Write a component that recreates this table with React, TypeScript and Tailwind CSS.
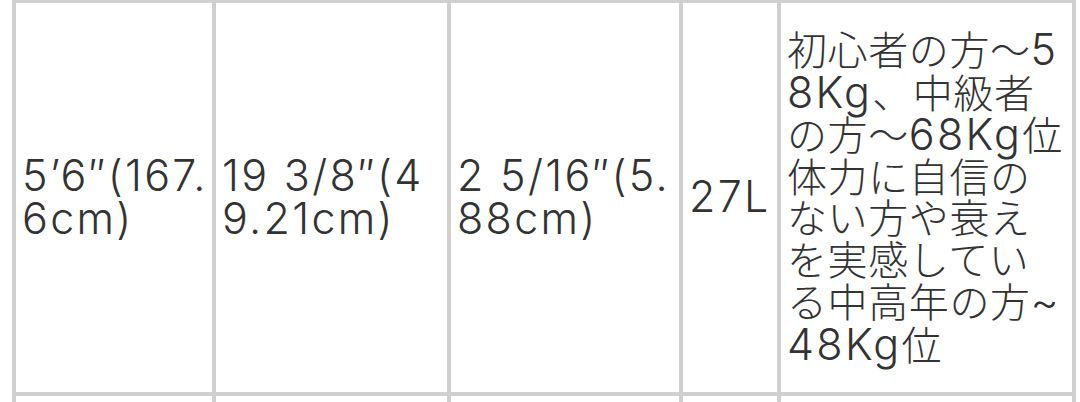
import React from "react";

const font = { fontFamily: 'Inter, "Noto Sans CJK JP", "Noto Sans", sans-serif' };

function Line({ text }: { text: string }) {
  const parts = text.split(/([\x00-\x7F’″~]+)/).filter((p) => p.length > 0);
  return (
    <div>
      {parts.map((p, i) =>
        /^[\x00-\x7F’″~]+$/.test(p) ? (
          <span key={i} className="text-[43px] tracking-[2.3px]">
            {p}
          </span>
        ) : (
          <span key={i} className="tracking-[0.6px]">
            {p}
          </span>
        )
      )}
    </div>
  );
}

function Cell({ lines }: { lines: string[] }) {
  return (
    <div className="bg-white flex items-center pl-[6px] pr-[0px]">
      <div className="text-[40px] leading-[41.5px] text-[#333333] whitespace-nowrap font-light">
        {lines.map((l, i) => (
          <Line key={i} text={l} />
        ))}
      </div>
    </div>
  );
}

export default function App() {
  return (
    <div className="w-[1080px] h-[402px] bg-white overflow-hidden" style={font}>
      <div className="ml-[12px] w-[1064px] bg-[#cfcfcf] pt-[3px] px-[4px] grid grid-cols-[196px_231px_228px_94px_291px] grid-rows-[389px_60px] gap-[4px]">
        <Cell lines={["5’6″(167.", "6cm)"]} />
        <Cell lines={["19 3/8″(4", "9.21cm)"]} />
        <Cell lines={["2 5/16″(5.", "88cm)"]} />
        <Cell lines={["27L"]} />
        <Cell
          lines={[
            "初心者の方～5",
            "8Kg、中級者",
            "の方～68Kg位",
            "体力に自信の",
            "ない方や衰え",
            "を実感してい",
            "る中高年の方~",
            "48Kg位",
          ]}
        />
        <div className="bg-white" />
        <div className="bg-white" />
        <div className="bg-white" />
        <div className="bg-white" />
        <div className="bg-white" />
      </div>
    </div>
  );
}
